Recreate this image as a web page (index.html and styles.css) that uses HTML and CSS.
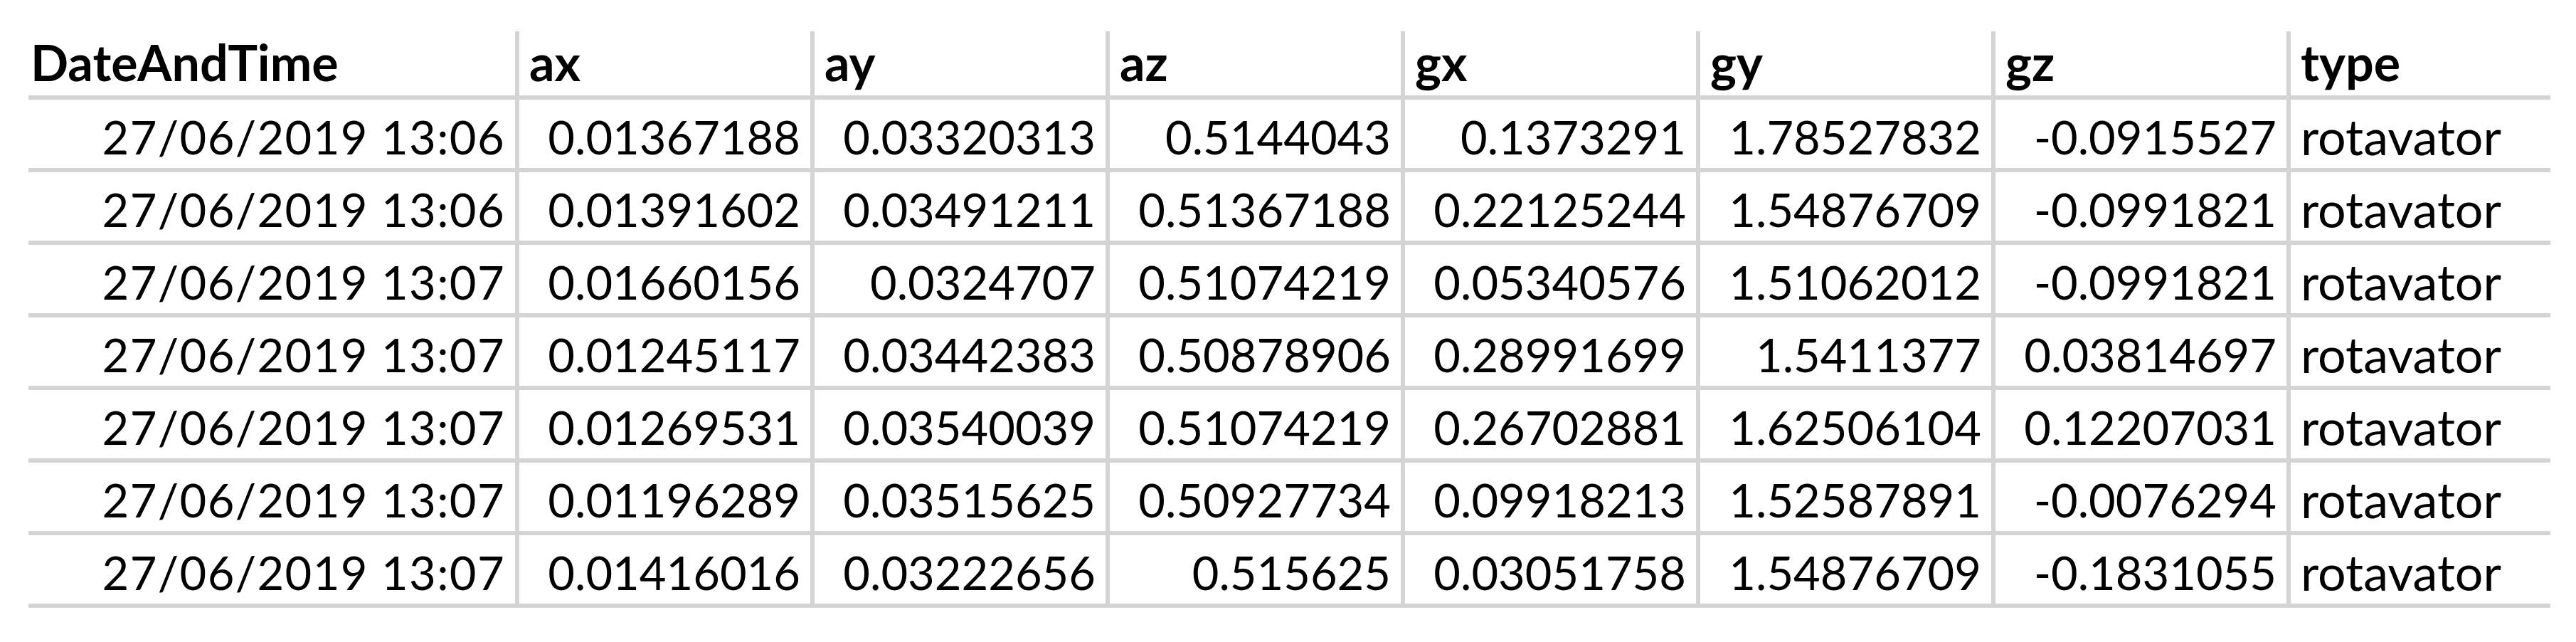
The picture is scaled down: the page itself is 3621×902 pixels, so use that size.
FILE: index.html
```html
<!DOCTYPE html>
<html lang="en">
<head>
<meta charset="utf-8">
<title>Sensor data</title>
<link rel="stylesheet" href="styles.css">
</head>
<body>
<div class="sheet">
  <div class="row head">
    <div class="cell first">DateAndTime</div>
    <div class="cell">ax</div>
    <div class="cell">ay</div>
    <div class="cell">az</div>
    <div class="cell">gx</div>
    <div class="cell">gy</div>
    <div class="cell">gz</div>
    <div class="cell">type</div>
  </div>
  <div class="row">
    <div class="cell first date">27/06/2019 13:06</div>
    <div class="cell num">0.01367188</div>
    <div class="cell num">0.03320313</div>
    <div class="cell num">0.5144043</div>
    <div class="cell num">0.1373291</div>
    <div class="cell num">1.78527832</div>
    <div class="cell num">-0.0915527</div>
    <div class="cell text">rotavator</div>
  </div>
  <div class="row">
    <div class="cell first date">27/06/2019 13:06</div>
    <div class="cell num">0.01391602</div>
    <div class="cell num">0.03491211</div>
    <div class="cell num">0.51367188</div>
    <div class="cell num">0.22125244</div>
    <div class="cell num">1.54876709</div>
    <div class="cell num">-0.0991821</div>
    <div class="cell text">rotavator</div>
  </div>
  <div class="row">
    <div class="cell first date">27/06/2019 13:07</div>
    <div class="cell num">0.01660156</div>
    <div class="cell num">0.0324707</div>
    <div class="cell num">0.51074219</div>
    <div class="cell num">0.05340576</div>
    <div class="cell num">1.51062012</div>
    <div class="cell num">-0.0991821</div>
    <div class="cell text">rotavator</div>
  </div>
  <div class="row">
    <div class="cell first date">27/06/2019 13:07</div>
    <div class="cell num">0.01245117</div>
    <div class="cell num">0.03442383</div>
    <div class="cell num">0.50878906</div>
    <div class="cell num">0.28991699</div>
    <div class="cell num">1.5411377</div>
    <div class="cell num">0.03814697</div>
    <div class="cell text">rotavator</div>
  </div>
  <div class="row">
    <div class="cell first date">27/06/2019 13:07</div>
    <div class="cell num">0.01269531</div>
    <div class="cell num">0.03540039</div>
    <div class="cell num">0.51074219</div>
    <div class="cell num">0.26702881</div>
    <div class="cell num">1.62506104</div>
    <div class="cell num">0.12207031</div>
    <div class="cell text">rotavator</div>
  </div>
  <div class="row">
    <div class="cell first date">27/06/2019 13:07</div>
    <div class="cell num">0.01196289</div>
    <div class="cell num">0.03515625</div>
    <div class="cell num">0.50927734</div>
    <div class="cell num">0.09918213</div>
    <div class="cell num">1.52587891</div>
    <div class="cell num">-0.0076294</div>
    <div class="cell text">rotavator</div>
  </div>
  <div class="row">
    <div class="cell first date">27/06/2019 13:07</div>
    <div class="cell num">0.01416016</div>
    <div class="cell num">0.03222656</div>
    <div class="cell num">0.515625</div>
    <div class="cell num">0.03051758</div>
    <div class="cell num">1.54876709</div>
    <div class="cell num">-0.1831055</div>
    <div class="cell text">rotavator</div>
  </div>
</div>
</body>
</html>
```
FILE: styles.css
```css
html, body {
  margin: 0;
  padding: 0;
  background: #ffffff;
}

body {
  font-family: "Lato", "Open Sans", sans-serif;
  color: #000000;
}

.sheet {
  display: grid;
  grid-template-columns: 684px repeat(6, 415px) 371px;
  grid-template-rows: 96px repeat(7, 102px);
  margin: 44px 0 0 40px;
  width: 3545px;
}

.row {
  display: contents;
}

.cell {
  box-sizing: border-box;
  display: flex;
  align-items: flex-end;
  justify-content: flex-start;
  padding: 0 14px 11px 14px;
  border-left: 6px solid #d4d4d4;
  border-bottom: 6px solid #d4d4d4;
  font-size: 65px;
  line-height: 1;
  white-space: nowrap;
}

.cell.first {
  border-left: none;
  padding-left: 3px;
}

.cell.num,
.cell.date {
  justify-content: flex-end;
}

.cell.date {
  letter-spacing: 1.4px;
}

.cell.text {
  font-size: 70px;
  padding-bottom: 10px;
}

.head .cell {
  font-weight: 700;
  font-size: 70px;
  padding-bottom: 12px;
}
```
